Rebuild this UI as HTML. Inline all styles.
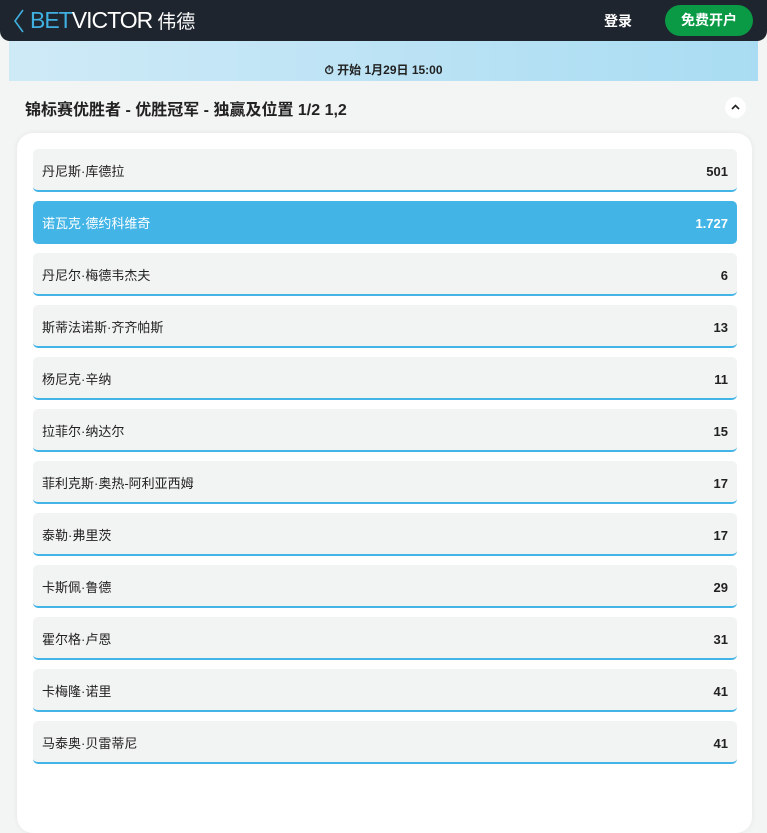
<!DOCTYPE html>
<html><head><meta charset="utf-8"><style>
*{margin:0;padding:0;box-sizing:border-box}
body{width:767px;height:773px;overflow:hidden;background:#f3f4f4;font-family:"Liberation Sans","Noto Sans CJK SC",sans-serif;position:relative}
.hdr{position:absolute;left:0;top:0;width:767px;height:41px;background:#1e252e;border-radius:0 0 10px 10px}
.logo{position:absolute;left:30px;top:6px;font-size:23px;letter-spacing:-1px;color:#fff;line-height:28px}
.logo b{font-weight:normal;color:#3fb0e0}
.logo .cn{font-size:19px;letter-spacing:0;margin-left:5px}
.login{position:absolute;left:604px;top:11px;color:#fff;font-weight:bold;font-size:14px}
.reg{position:absolute;left:665px;top:5px;width:88px;height:31px;border-radius:16px;background:#0a9a45;color:#fff;font-weight:bold;font-size:14px;text-align:center;line-height:31px}
.ban{position:absolute;left:9px;top:41px;width:749px;height:40px;background:linear-gradient(90deg,#cfeaf7,#a9dcf2);text-align:center;font-size:12px;font-weight:bold;color:#222;padding-top:20px}
.title{position:absolute;left:25px;top:96px;font-size:16px;font-weight:bold;color:#222}
.col{position:absolute;left:725px;top:97px;width:21px;height:21px;border-radius:50%;background:#fff}
.card{position:absolute;left:17px;top:133px;width:735px;height:700px;background:#fff;border-radius:16px;box-shadow:0 0 6px rgba(0,0,0,.06)}
.row{position:absolute;left:33px;width:704px;height:43px;background:#f2f3f3;border-radius:5px;border-bottom:2px solid #42b4e5;font-size:13px;color:#222;line-height:45px;padding:0 9px}
.row span{float:right;font-weight:bold}
.row.sel{background:#42b4e5;color:#fff;border-bottom:none}
</style></head><body>
<div class="hdr">
<svg style="position:absolute;left:13px;top:9px" width="12" height="24" viewBox="0 0 12 24"><path d="M10 1 L2 12 L10 23" fill="none" stroke="#3fb0e0" stroke-width="1.6"/></svg>
<div class="logo"><b>BET</b>VICTOR<span class="cn">伟德</span></div>
<div class="login">登录</div><div class="reg">免费开户</div></div>
<div class="ban">⏱ 开始 1月29日 15:00</div>
<div class="title">锦标赛优胜者 - 优胜冠军 - 独赢及位置 1/2 1,2</div>
<div class="col"><svg width="21" height="21" viewBox="0 0 21 21"><path d="M7 12 L10.5 8.5 L14 12" fill="none" stroke="#222" stroke-width="1.6"/></svg></div>
<div class="card"></div>
<div class="row" style="top:149px">丹尼斯·库德拉<span>501</span></div>
<div class="row sel" style="top:201px">诺瓦克·德约科维奇<span>1.727</span></div>
<div class="row" style="top:253px">丹尼尔·梅德韦杰夫<span>6</span></div>
<div class="row" style="top:305px">斯蒂法诺斯·齐齐帕斯<span>13</span></div>
<div class="row" style="top:357px">杨尼克·辛纳<span>11</span></div>
<div class="row" style="top:409px">拉菲尔·纳达尔<span>15</span></div>
<div class="row" style="top:461px">菲利克斯·奥热-阿利亚西姆<span>17</span></div>
<div class="row" style="top:513px">泰勒·弗里茨<span>17</span></div>
<div class="row" style="top:565px">卡斯佩·鲁德<span>29</span></div>
<div class="row" style="top:617px">霍尔格·卢恩<span>31</span></div>
<div class="row" style="top:669px">卡梅隆·诺里<span>41</span></div>
<div class="row" style="top:721px">马泰奥·贝雷蒂尼<span>41</span></div>
</body></html>
